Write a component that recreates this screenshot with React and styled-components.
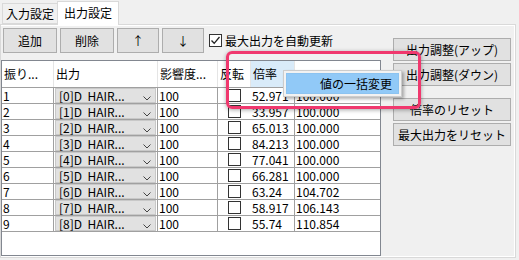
import React from "react";
import styled, { createGlobalStyle } from "styled-components";

const GlobalStyle = createGlobalStyle`
  body {
    margin: 0;
    background: #f0f0f0;
    font-family: "Noto Sans CJK JP", "Noto Sans", sans-serif;
    font-size: 12px;
    color: #000;
  }
`;

const rows = [
  ["1", "[0]D  HAIR...", "100", "52.971", "100.000"],
  ["2", "[1]D  HAIR...", "100", "33.957", "100.000"],
  ["3", "[2]D  HAIR...", "100", "65.013", "100.000"],
  ["4", "[3]D  HAIR...", "100", "84.213", "100.000"],
  ["5", "[4]D  HAIR...", "100", "77.041", "100.000"],
  ["6", "[5]D  HAIR...", "100", "66.281", "100.000"],
  ["7", "[6]D  HAIR...", "100", "63.24", "104.702"],
  ["8", "[7]D  HAIR...", "100", "58.917", "106.143"],
  ["9", "[8]D  HAIR...", "100", "55.74", "110.854"],
];

const COLS = "52px 104px 60px 33px 44px 1fr";

function App() {
  return (
    <>
      <GlobalStyle />
      <Window>
        <TabStrip>
          <Tab>入力設定</Tab>
          <Tab active>出力設定</Tab>
        </TabStrip>
        <TabPage>
          <LeftCol>
            <Toolbar>
              <ToolButton width={54}>追加</ToolButton>
              <ToolButton width={54}>削除</ToolButton>
              <ToolButton width={42}>↑</ToolButton>
              <ToolButton width={42}>↓</ToolButton>
              <CheckLabel>
                <CheckBox checked>
                  <svg width="11" height="11" viewBox="0 0 11 11">
                    <polyline
                      points="1.5,5.5 4.2,8.3 9.5,2"
                      fill="none"
                      stroke="#222"
                      strokeWidth="1.3"
                    />
                  </svg>
                </CheckBox>
                最大出力を自動更新
              </CheckLabel>
            </Toolbar>
            <Grid>
              <HeaderRow>
                <HeadCell>振り...</HeadCell>
                <HeadCell>出力</HeadCell>
                <HeadCell>影響度...</HeadCell>
                <HeadCell>反転</HeadCell>
                <HeadCell selected>倍率</HeadCell>
                <HeadCell last></HeadCell>
              </HeaderRow>
              {rows.map((r) => (
                <Row key={r[0]}>
                  <Cell>{r[0]}</Cell>
                  <Cell>
                    <Combo>
                      <span>{r[1]}</span>
                      <svg width="8" height="5" viewBox="0 0 8 5">
                        <polyline
                          points="0.5,0.5 4,4 7.5,0.5"
                          fill="none"
                          stroke="#444"
                          strokeWidth="1"
                        />
                      </svg>
                    </Combo>
                  </Cell>
                  <Cell>{r[2]}</Cell>
                  <Cell center noBorder>
                    <CheckBox />
                  </Cell>
                  <Cell>{r[3]}</Cell>
                  <Cell last>{r[4]}</Cell>
                </Row>
              ))}
            </Grid>
          </LeftCol>
          <SidePanel>
            <SideButton>出力調整(アップ)</SideButton>
            <SideButton>出力調整(ダウン)</SideButton>
            <SideButton spaced>倍率のリセット</SideButton>
            <SideButton>最大出力をリセット</SideButton>
          </SidePanel>
        </TabPage>

        <Highlight />
        <ContextMenu>
          <MenuItem>値の一括変更</MenuItem>
        </ContextMenu>
      </Window>
    </>
  );
}

const Window = styled.div`
  position: relative;
  width: 519px;
  height: 260px;
  overflow: hidden;
  background: #f0f0f0;
`;

const TabStrip = styled.div`
  display: flex;
  align-items: flex-end;
  height: 24px;
  padding-left: 2px;
`;

const Tab = styled.div`
  position: relative;
  z-index: ${(p) => (p.active ? 2 : 1)};
  box-sizing: border-box;
  height: ${(p) => (p.active ? 24 : 21)}px;
  margin-bottom: ${(p) => (p.active ? -1 : 0)}px;
  padding: 0 ${(p) => (p.active ? 6 : 3)}px;
  border: 1px solid #d9d9d9;
  border-bottom: ${(p) => (p.active ? "none" : "1px solid #d9d9d9")};
  margin-left: ${(p) => (p.active ? -1 : 0)}px;
  background: ${(p) => (p.active ? "#fff" : "#f0f0f0")};
  line-height: ${(p) => (p.active ? 22 : 19)}px;
  font-size: 12px;
  white-space: nowrap;
`;

const TabPage = styled.div`
  display: flex;
  box-sizing: border-box;
  width: 516px;
  height: 234px;
  padding-top: 3px;
  border: 1px solid #d9d9d9;
  box-shadow: inset 0 1px 0 #fff, inset -1px -1px 0 #fff;
  background: #f0f0f0;
`;

const LeftCol = styled.div`
  display: flex;
  flex-direction: column;
  width: 380px;
`;

const Toolbar = styled.div`
  display: flex;
  align-items: center;
  gap: 3px;
  height: 25px;
  padding-left: 2px;
  margin-bottom: 7px;
`;

const ToolButton = styled.div`
  box-sizing: border-box;
  width: ${(p) => p.width}px;
  height: 25px;
  border: 1px solid #adadad;
  background: #e1e1e1;
  display: flex;
  align-items: center;
  justify-content: center;
  font-size: 12px;
`;

const CheckLabel = styled.label`
  display: flex;
  align-items: center;
  gap: 3px;
  margin-left: 2px;
  font-size: 12px;
  white-space: nowrap;
`;

const CheckBox = styled.span`
  box-sizing: border-box;
  width: 13px;
  height: 13px;
  border: 1px solid #333;
  background: #fff;
  display: inline-flex;
  align-items: center;
  justify-content: center;
`;

const Grid = styled.div`
  box-sizing: border-box;
  height: 196px;
  border: 1px solid #828790;
  background: #fff;
`;

const HeaderRow = styled.div`
  display: grid;
  grid-template-columns: ${COLS};
  height: 27px;
  box-sizing: border-box;
  border-bottom: 1px solid #a0a0a0;
`;

const HeadCell = styled.div`
  box-sizing: border-box;
  padding-left: 2px;
  line-height: 26px;
  font-size: 12px;
  white-space: nowrap;
  overflow: hidden;
  background: ${(p) => (p.selected ? "#d9ebf9" : "#fff")};
  border-right: ${(p) => (p.last ? "none" : "1px solid #e5e5e5")};
`;

const Row = styled.div`
  display: grid;
  grid-template-columns: ${COLS};
  height: 16px;
  box-sizing: border-box;
  border-bottom: 1px solid #a0a0a0;
`;

const Cell = styled.div`
  box-sizing: border-box;
  padding-left: ${(p) => (p.center ? 0 : 1)}px;
  line-height: 15px;
  font-size: 12px;
  white-space: nowrap;
  overflow: hidden;
  display: flex;
  align-items: center;
  justify-content: ${(p) => (p.center ? "center" : "flex-start")};
  border-right: ${(p) => (p.noBorder || p.last ? "none" : "1px solid #a0a0a0")};
`;

const Combo = styled.div`
  box-sizing: border-box;
  width: 101px;
  height: 15px;
  display: flex;
  align-items: center;
  justify-content: space-between;
  padding: 0 4px 0 3px;
  background: #e1e1e1;
  border: 1px solid #c8c8c8;
  span {
    white-space: pre;
    line-height: 13px;
  }
  svg {
    margin-top: 5px;
  }
`;

const SidePanel = styled.div`
  display: flex;
  flex-direction: column;
  gap: 2px;
  width: 118px;
  margin-left: 12px;
  margin-top: 10px;
`;

const SideButton = styled.div`
  box-sizing: border-box;
  height: 23px;
  margin-top: ${(p) => (p.spaced ? 10 : 0)}px;
  border: 1px solid #adadad;
  background: #e1e1e1;
  display: flex;
  align-items: center;
  justify-content: center;
  font-size: 12px;
  white-space: nowrap;
`;

const Highlight = styled.div`
  position: absolute;
  left: 226px;
  top: 51px;
  width: 195px;
  height: 58px;
  box-sizing: border-box;
  border: 3px solid #f0386e;
  border-radius: 6px;
  box-shadow: 0 1px 4px rgba(0, 0, 0, 0.35);
  pointer-events: none;
`;

const ContextMenu = styled.div`
  position: absolute;
  left: 283px;
  top: 70px;
  width: 119px;
  height: 27px;
  box-sizing: border-box;
  padding: 2px;
  border: 1px solid #cccccc;
  background: #f2f2f2;
  box-shadow: 2px 2px 3px rgba(0, 0, 0, 0.3);
`;

const MenuItem = styled.div`
  box-sizing: border-box;
  height: 21px;
  padding-left: 33px;
  line-height: 20px;
  background: #91c9f7;
  border: 1px solid #8cc3f0;
  font-size: 12px;
  white-space: nowrap;
`;

export default App;
